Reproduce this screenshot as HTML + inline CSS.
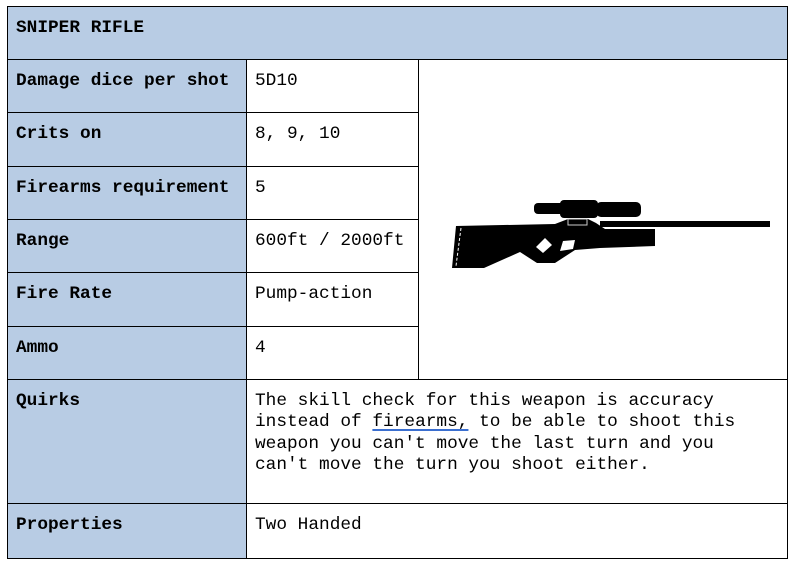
<!DOCTYPE html>
<html><head><meta charset="utf-8"><style>
body{margin:0;width:791px;height:565px;background:#fff;position:relative;overflow:hidden;font-family:"Liberation Mono","DejaVu Sans Mono",monospace;font-size:17.8px;color:#000}
.c{position:absolute;box-sizing:border-box;border:1px solid #000;padding:11px 0 0 8px;line-height:21.3px}
.h{background:#b8cce4;font-weight:bold}
u{text-decoration:underline;text-decoration-color:#3b6fd0;text-decoration-thickness:2px;text-underline-offset:3px}
</style></head><body>
<div class="c h" style="left:7px;top:6px;width:781px;height:54px">SNIPER RIFLE</div>
<div class="c h" style="left:7px;top:59px;width:240px;height:54px">Damage dice per shot</div>
<div class="c" style="left:246px;top:59px;width:173px;height:54px">5D10</div>
<div class="c h" style="left:7px;top:112px;width:240px;height:55px">Crits on</div>
<div class="c" style="left:246px;top:112px;width:173px;height:55px">8, 9, 10</div>
<div class="c h" style="left:7px;top:166px;width:240px;height:54px">Firearms requirement</div>
<div class="c" style="left:246px;top:166px;width:173px;height:54px">5</div>
<div class="c h" style="left:7px;top:219px;width:240px;height:54px">Range</div>
<div class="c" style="left:246px;top:219px;width:173px;height:54px">600ft / 2000ft</div>
<div class="c h" style="left:7px;top:272px;width:240px;height:55px">Fire Rate</div>
<div class="c" style="left:246px;top:272px;width:173px;height:55px">Pump-action</div>
<div class="c h" style="left:7px;top:326px;width:240px;height:54px">Ammo</div>
<div class="c" style="left:246px;top:326px;width:173px;height:54px">4</div>
<div class="c" style="left:418px;top:59px;width:370px;height:321px"></div>
<div class="c h" style="left:7px;top:379px;width:240px;height:125px">Quirks</div>
<div class="c" style="left:246px;top:379px;width:542px;height:125px">The skill check for this weapon is accuracy<br>instead of <u>firearms,</u> to be able to shoot this<br>weapon you can't move the last turn and you<br>can't move the turn you shoot either.</div>
<div class="c h" style="left:7px;top:503px;width:240px;height:56px">Properties</div>
<div class="c" style="left:246px;top:503px;width:542px;height:56px">Two Handed</div>
<svg style="position:absolute;left:0;top:0" width="791" height="565">
<rect x="534" y="203" width="30" height="11" rx="4"/>
<rect x="560" y="200" width="38" height="18" rx="4"/>
<rect x="596" y="202" width="45" height="15" rx="5"/>
<rect x="600" y="221" width="170" height="6"/>
<path d="M456 226 L555 224 L568 219 L588 219 L596 223 L605 229 L655 229 L655 246 L600 248 L575 250 L555 263 L537 263 L520 252 L484 268 L452 268 Z"/>
<rect x="568" y="219" width="19" height="6" fill="none" stroke="#ccc" stroke-width="1"/>
<path d="M536 247 L545 238 L552 245 L543 253 Z" fill="#fff"/>
<path d="M563 241 L575 240 L573 249 L560 251 Z" fill="#fff"/>
<line x1="461" y1="228" x2="456" y2="266" stroke="#fff" stroke-width="1" stroke-dasharray="3 2"/>
</svg>
</body></html>
